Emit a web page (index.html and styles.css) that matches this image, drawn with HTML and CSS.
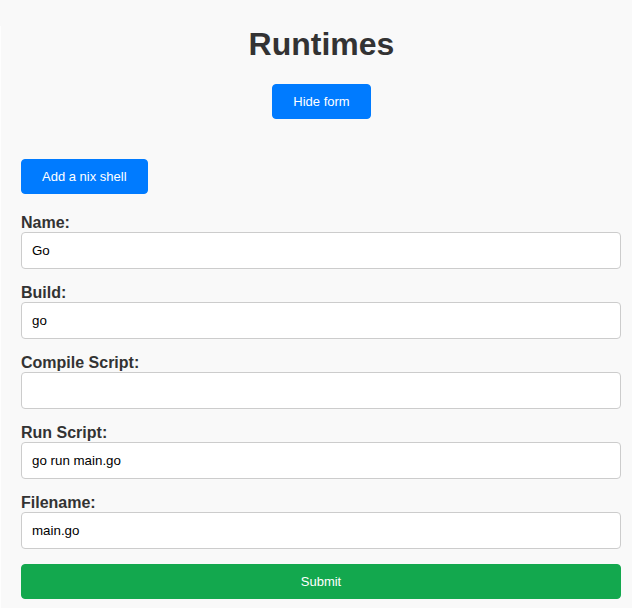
FILE: index.html
```html
<!DOCTYPE html>
<html>
<head>
<meta charset="utf-8">
<title>Runtimes</title>
<link rel="stylesheet" href="styles.css">
</head>
<body>
<div class="page">
  <h1 class="title">Runtimes</h1>
  <div class="center">
    <button class="btn btn-blue">Hide form</button>
  </div>
  <div class="actions">
    <button class="btn btn-blue">Add a nix shell</button>
  </div>
  <form class="form">
    <label class="label">Name:</label>
    <input class="input" type="text" value="Go">
    <label class="label">Build:</label>
    <input class="input" type="text" value="go">
    <label class="label">Compile Script:</label>
    <input class="input" type="text" value="">
    <label class="label">Run Script:</label>
    <input class="input" type="text" value="go run main.go">
    <label class="label">Filename:</label>
    <input class="input" type="text" value="main.go">
    <button class="btn btn-green" type="button">Submit</button>
  </form>
</div>
</body>
</html>
```
FILE: styles.css
```css
html, body {
  margin: 0;
  padding: 0;
  background: #f9f9f9;
}
body {
  font-family: "Liberation Sans", Arial, sans-serif;
  color: #333;
}
.page {
  min-height: 608px;
  box-sizing: border-box;
  padding: 0 10px 0 20px;
  border-left: 1px solid #fefefe;
}
.title {
  margin: 26px 0 21px;
  font-size: 32px;
  line-height: 37px;
  font-weight: bold;
  text-align: center;
  color: #333;
}
.center {
  display: flex;
  justify-content: center;
}
.actions {
  margin-top: 40px;
  display: flex;
}
.btn {
  font-family: "Liberation Sans", Arial, sans-serif;
  font-size: 13px;
  line-height: 15px;
  padding: 9px 20px;
  border-radius: 4px;
  color: #fff;
  cursor: pointer;
}
.btn-blue {
  background: #007bff;
  border: 1px solid #007bff;
}
.btn-green {
  background: #13a84e;
  border: 1px solid #13a84e;
  width: 600px;
  margin-top: 1px;
}
.form {
  margin-top: 19px;
  display: flex;
  flex-direction: column;
  width: 600px;
}
.label {
  display: block;
  font-size: 16px;
  line-height: 19px;
  font-weight: bold;
  color: #333;
}
.input {
  box-sizing: border-box;
  width: 600px;
  height: 37px;
  margin: 0 0 14px;
  padding: 10px;
  border: 1px solid #ccc;
  border-radius: 4px;
  background: #fff;
  font-family: "Liberation Sans", Arial, sans-serif;
  font-size: 13.33px;
  color: #000;
}
```
